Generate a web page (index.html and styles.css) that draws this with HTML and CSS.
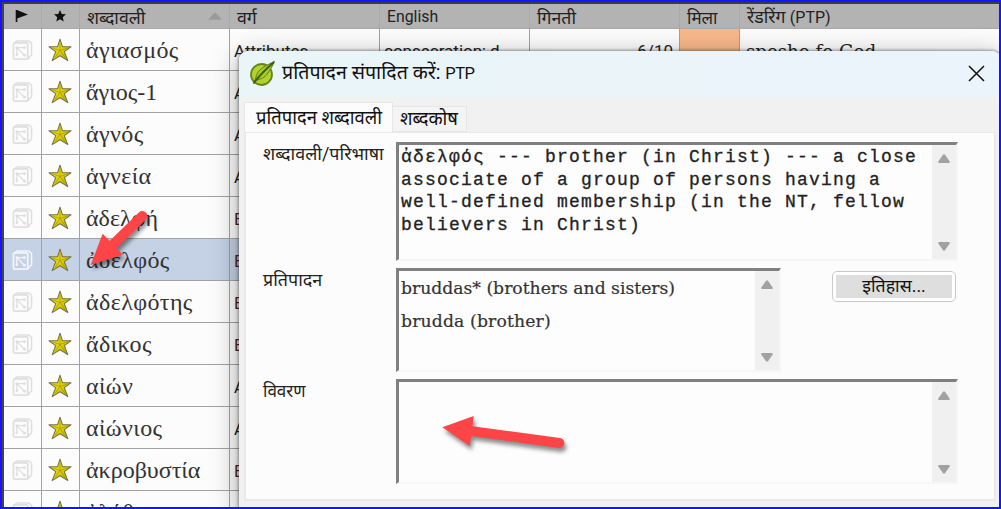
FILE: index.html
```
<!DOCTYPE html>
<html lang="hi">
<head>
<meta charset="utf-8">
<title>प्रतिपादन संपादित करें: PTP</title>
<link rel="stylesheet" href="styles.css">
</head>
<body>
<svg class="defs" width="0" height="0">
  <defs>
    <linearGradient id="gold" x1="0" y1="0" x2="1" y2="1"><stop offset="0" stop-color="#f5ec3c"/><stop offset=".55" stop-color="#dfcf05"/><stop offset="1" stop-color="#a59a00"/></linearGradient>
    <symbol id="star" viewBox="0 0 24 24">
      <path d="M12 1.2 14.4 8.6 23 8.7 16.3 13.6 19.8 22.6 12 17.8 4.2 22.6 7.7 13.6 1 8.7 9.6 8.6Z" fill="url(#gold)" stroke="#77754a" stroke-width="1.1" stroke-linejoin="round"/>
      <path d="M12 12.5 12 4M12 12.5 20 9.7M12 12.5 17 19.5M12 12.5 7 19.5M12 12.5 4 9.7" stroke="#a39a10" stroke-width=".8" fill="none"/>
    </symbol>
    <symbol id="dice" viewBox="0 0 22 22">
      <path d="M2 4 5 1.500H17.500L20.500 4V16L16.500 20.500" fill="none" stroke="currentColor" stroke-width="1.600"/>
      <rect x="1.500" y="3.500" width="15" height="17" rx="1.500" fill="none" stroke="currentColor" stroke-width="1.800"/>
      <path d="M5 16V8.500H13M5.500 9 13 16.500" fill="none" stroke="currentColor" stroke-width="1.300"/>
      <g fill="currentColor"><circle cx="5" cy="8.500" r="1.500"/><circle cx="13" cy="8.500" r="1.500"/><circle cx="5" cy="16" r="1.300"/><circle cx="13" cy="16.500" r="1.500"/></g>
    </symbol>
    <symbol id="up" viewBox="0 0 12 9"><path d="M5 .7Q6 0 7 .7L11.700 7.500Q12 9 11 9H1Q0 9 .3 7.500Z" fill="#a2a2a2"/></symbol>
    <symbol id="down" viewBox="0 0 12 9"><path d="M5 8.300Q6 9 7 8.300L11.700 1.500Q12 0 11 0H1Q0 0 .3 1.500Z" fill="#a2a2a2"/></symbol>
  </defs>
</svg>
<div class="app">
  <div class="table">
    <div class="row head">
      <div class="cell icon"><svg width="14" height="14" viewBox="0 0 14 14"><path d="M1.500 1V13" stroke="#111" stroke-width="1.600"/><path d="M2 1 13 5.500 2 9.500Z" fill="#111"/></svg></div>
      <div class="cell icon"><svg width="12" height="12" viewBox="0 0 24 24"><path d="M12 0 15.500 8 24 8.700 17.500 14.300 19.500 23 12 18.300 4.500 23 6.500 14.300 0 8.700 8.500 8Z" fill="#111"/></svg></div>
      <div class="cell sorted"><span class="deva">शब्दावली</span><svg width="14" height="8" viewBox="0 0 15 8"><path d="M7.500 0 15 8H0Z" fill="#9a9a9a"/></svg></div>
      <div class="cell"><span class="deva">वर्ग</span></div>
      <div class="cell"><span class="english">English</span></div>
      <div class="cell"><span class="deva">गिनती</span></div>
      <div class="cell"><span class="deva narrow">मिला</span></div>
      <div class="cell"><span class="deva">रेंडरिंग <span class="ptp">(PTP)</span></span></div>
    </div>
    <div class="row"><div class="cell icon"><svg class="dice"><use href="#dice"/></svg></div><div class="cell icon"><svg class="star"><use href="#star"/></svg></div><div class="cell greek"><span class="wide">ἁγιασμός</span></div><div class="cell latin"><span>Attributes</span></div><div class="cell latin"><span>consecration; d...</span></div><div class="cell latin count"><span>6/10</span></div><div class="cell found"></div><div class="cell slab"><span>spesho fo God</span></div></div>
    <div class="row"><div class="cell icon"><svg class="dice"><use href="#dice"/></svg></div><div class="cell icon"><svg class="star"><use href="#star"/></svg></div><div class="cell greek"><span>ἅγιος-1</span></div><div class="cell latin"><span>A</span></div></div>
    <div class="row"><div class="cell icon"><svg class="dice"><use href="#dice"/></svg></div><div class="cell icon"><svg class="star"><use href="#star"/></svg></div><div class="cell greek"><span class="wide">ἁγνός</span></div><div class="cell latin"><span>A</span></div></div>
    <div class="row"><div class="cell icon"><svg class="dice"><use href="#dice"/></svg></div><div class="cell icon"><svg class="star"><use href="#star"/></svg></div><div class="cell greek"><span class="wide">ἁγνεία</span></div><div class="cell latin"><span>A</span></div></div>
    <div class="row"><div class="cell icon"><svg class="dice"><use href="#dice"/></svg></div><div class="cell icon"><svg class="star"><use href="#star"/></svg></div><div class="cell greek"><span>ἀδελφή</span></div><div class="cell latin being"><span>B</span></div></div>
    <div class="row selected"><div class="cell icon"><svg class="dice"><use href="#dice"/></svg></div><div class="cell icon"><svg class="star"><use href="#star"/></svg></div><div class="cell greek"><span class="wide">ἀδελφός</span></div><div class="cell latin being"><span>B</span></div></div>
    <div class="row"><div class="cell icon"><svg class="dice"><use href="#dice"/></svg></div><div class="cell icon"><svg class="star"><use href="#star"/></svg></div><div class="cell greek"><span class="wide">ἀδελφότης</span></div><div class="cell latin being"><span>B</span></div></div>
    <div class="row"><div class="cell icon"><svg class="dice"><use href="#dice"/></svg></div><div class="cell icon"><svg class="star"><use href="#star"/></svg></div><div class="cell greek"><span class="wide">ἄδικος</span></div><div class="cell latin being"><span>B</span></div></div>
    <div class="row"><div class="cell icon"><svg class="dice"><use href="#dice"/></svg></div><div class="cell icon"><svg class="star"><use href="#star"/></svg></div><div class="cell greek"><span class="wide">αἰών</span></div><div class="cell latin"><span>A</span></div></div>
    <div class="row"><div class="cell icon"><svg class="dice"><use href="#dice"/></svg></div><div class="cell icon"><svg class="star"><use href="#star"/></svg></div><div class="cell greek"><span class="wide">αἰώνιος</span></div><div class="cell latin"><span>A</span></div></div>
    <div class="row"><div class="cell icon"><svg class="dice"><use href="#dice"/></svg></div><div class="cell icon"><svg class="star"><use href="#star"/></svg></div><div class="cell greek"><span>ἀκροβυστία</span></div><div class="cell latin being"><span>B</span></div></div>
    <div class="row"><div class="cell icon"><svg class="dice"><use href="#dice"/></svg></div><div class="cell icon"><svg class="star"><use href="#star"/></svg></div><div class="cell greek"><span>ἀλήθ</span></div><div class="cell latin"></div></div>
  </div>

  <div class="dialog">
    <div class="titlebar">
      <svg width="25" height="25" viewBox="0 0 25 25"><circle cx="11.500" cy="13.500" r="10.500" fill="#b1d32b" stroke="#65851c" stroke-width="1.800"/><path d="M24.500 .5C17 4 10 7 7 13C6 15 6 17 5 20C9 18 13 18 16.500 14C19.500 10 22.500 5 24.500 .5Z" fill="#a6cb25" stroke="#5c7f1b" stroke-width="1"/><path d="M3.500 22.500C8 16 15 9 24 1" stroke="#3d5e1b" stroke-width="2" fill="none"/></svg>
      <span class="title">प्रतिपादन संपादित करें: <span class="ptp">PTP</span></span>
      <svg class="close" width="17" height="17" viewBox="0 0 17 17"><path d="M1 1 16 16M16 1 1 16" stroke="#111" stroke-width="1.500"/></svg>
    </div>
    <div class="tabs"><div class="tab active"><span>प्रतिपादन शब्दावली</span></div><div class="tab"><span>शब्दकोष</span></div></div>
    <div class="page">
      <span class="label">शब्दावली/परिभाषा</span>
      <div class="box"><div class="mono">ἀδελφός --- brother (in Christ) --- a close<br>associate of a group of persons having a<br>well-defined membership (in the NT, fellow<br>believers in Christ)</div><div class="scroll"><svg><use href="#up"/></svg><svg><use href="#down"/></svg></div></div>
      <span class="label">प्रतिपादन</span>
      <div class="split">
        <div class="box"><div class="rend"><div>bruddas* (brothers and sisters)</div><div class="second">brudda (brother)</div></div><div class="scroll"><svg><use href="#up"/></svg><svg><use href="#down"/></svg></div></div>
        <div class="button"><span>इतिहास...</span></div>
      </div>
      <span class="label short">विवरण</span>
      <div class="box"><div></div><div class="scroll"><svg><use href="#up"/></svg><svg><use href="#down"/></svg></div></div>
    </div>
  </div>
  <svg class="arrows" width="1001" height="509" viewBox="0 0 1001 509">
    <g fill="#fd4446" stroke="none">
      <path d="M90.700 265 102.700 233.700 109.500 241 138.800 212.500A5 5 0 0 1 145.800 219.700L116.500 248.200 122.700 254.700Z"/>
      <path d="M442.300 427.300 473.700 416 472.500 426.200 560 438A5 5 0 0 1 558.700 448L471.200 436 469.700 446Z"/>
    </g>
  </svg>
</div>
</body>
</html>
```
FILE: styles.css
```
* { box-sizing: border-box; }
body { margin: 0; font-family: Roboto, "Noto Sans Devanagari", "Noto Sans", sans-serif; }
.defs { display: block; }
.app { position: relative; width: 1001px; height: 509px; border: 2px solid #1414ff; background: #fcfcfc; overflow: hidden; color: #222; }
span { white-space: nowrap; display: inline-block; }

.table { border-left: 2px solid #444; border-top: 2px solid #3c3c3c; width: 1000px; }
.row { display: grid; grid-template-columns: 38px 38px 150px 150px 150px 150px 60px 1fr; height: 42px; }
.cell { border-right: 1px solid #a2a2a2; border-bottom: 1px solid #a2a2a2; padding-left: 7px; display: flex; align-items: center; overflow: hidden; }
.cell.icon { padding: 0 1px 0 0; justify-content: center; }
.head { height: 25px; background: #b3b3b3; font-size: 16px; color: #222; }
.head .cell { border-color: #a9a9a9; }
.sorted { justify-content: space-between; padding-right: 7px; }
.deva { font-size: 17.7px; line-height: 22px; padding-top: 3px; }
.narrow { font-size: 17px; }
.deva .ptp { font-size: 16px; }
.english { font-size: 15.8px; padding-top: 1px; }
.dice { width: 21px; height: 22px; color: #dedede; }
.star { width: 24px; height: 24px; }
.greek { padding-left: 6px; font: 24px "Liberation Serif", serif; color: #333; }
.greek span { padding-top: 2px; }
.greek .wide { letter-spacing: .4px; }
.latin { padding-left: 4px; font-size: 17px; }
.latin span { padding-top: 2px; }
.being { color: #5a2020; }
.count { justify-content: flex-end; padding-right: 6px; }
.found { background: #f8b88a; }
.slab { padding-left: 6px; font: 18.2px "DejaVu Serif", serif; }
.slab span { padding-top: 3px; }
.selected { background: #c5d1e5; }
.selected .dice { color: #f4f6fa; }

.dialog { position: absolute; left: 237px; top: 49px; width: 762px; height: 460px; border-radius: 9px 9px 0 0; background: #f1f1f1; box-shadow: 0 0 3px 1px rgba(0,0,0,.35), 0 6px 28px rgba(0,0,0,.35); }
.titlebar { height: 46px; border-radius: 9px 9px 0 0; background: linear-gradient(90deg, #e9f5f7, #ebf3fb); display: flex; align-items: center; padding: 0 16px 2px 11px; }
.title { font-size: 19.6px; line-height: 26px; margin-left: 7px; color: #111; }
.title .ptp { font-size: 16.500px; letter-spacing: -.5px; }
.close { margin-left: auto; }
.tabs { display: flex; align-items: flex-end; height: 35px; padding-left: 5px; }
.tab { height: 26px; width: 74px; border: 1px solid #e6e6e6; border-left: 0; padding-left: 7px; background: #f4f4f4; color: #111; font-size: 18.4px; line-height: 24px; display: flex; align-items: center; }
.tab.active { height: 30px; width: 149px; border-left: 1px solid #e6e6e6; border-bottom: 0; background: #fcfcfc; padding-left: 11px; }
.page { margin: 0 5px; height: 369px; border: 2px solid #e9e9e9; border-top-width: 1px; background: #fcfcfc; padding: 9px 34px 0 17px; display: grid; grid-template-columns: 133px 562px; grid-template-rows: 119px 104px 105px; row-gap: 7px; }
.label { font-size: 17.900px; line-height: 24px; }
.label.short { font-size: 17px; }
.box { border: 3px solid #808080; border-right-color: #f6f6f6; border-bottom-color: #f6f6f6; border-right-width: 2px; border-bottom-width: 2px; display: flex; justify-content: space-between; background: #fdfdfd; overflow: hidden; }
.mono { font: 18px/22.5px "Liberation Mono", monospace; letter-spacing: 1.2px; padding: 1px 0 0 2px; white-space: nowrap; color: #222; -webkit-text-stroke: .3px #222; }
.scroll { flex: none; width: 24px; background: #f0f0f0; display: flex; flex-direction: column; justify-content: space-between; align-items: center; padding: 9px 0 8px; }
.scroll svg { width: 12px; height: 9px; }
.split { display: flex; justify-content: space-between; }
.split .box { width: 385px; }
.rend { font: 17.200px/33px "DejaVu Serif", serif; padding: 1px 0 0 2px; white-space: nowrap; color: #333; -webkit-text-stroke: .2px #333; }
.rend .second { letter-spacing: .15px; }
.button { width: 124px; height: 31px; margin: 3px 2px 0 0; padding: 3px; border: 1px solid #c9c9c9; border-radius: 5px; background: #fff; }
.button span { display: flex; height: 100%; align-items: center; justify-content: center; background: #dedede; font-size: 17.800px; color: #111; }
.arrows { position: absolute; left: -2px; top: -2px; filter: drop-shadow(2px 4px 2px rgba(0,0,0,.45)); }
```
